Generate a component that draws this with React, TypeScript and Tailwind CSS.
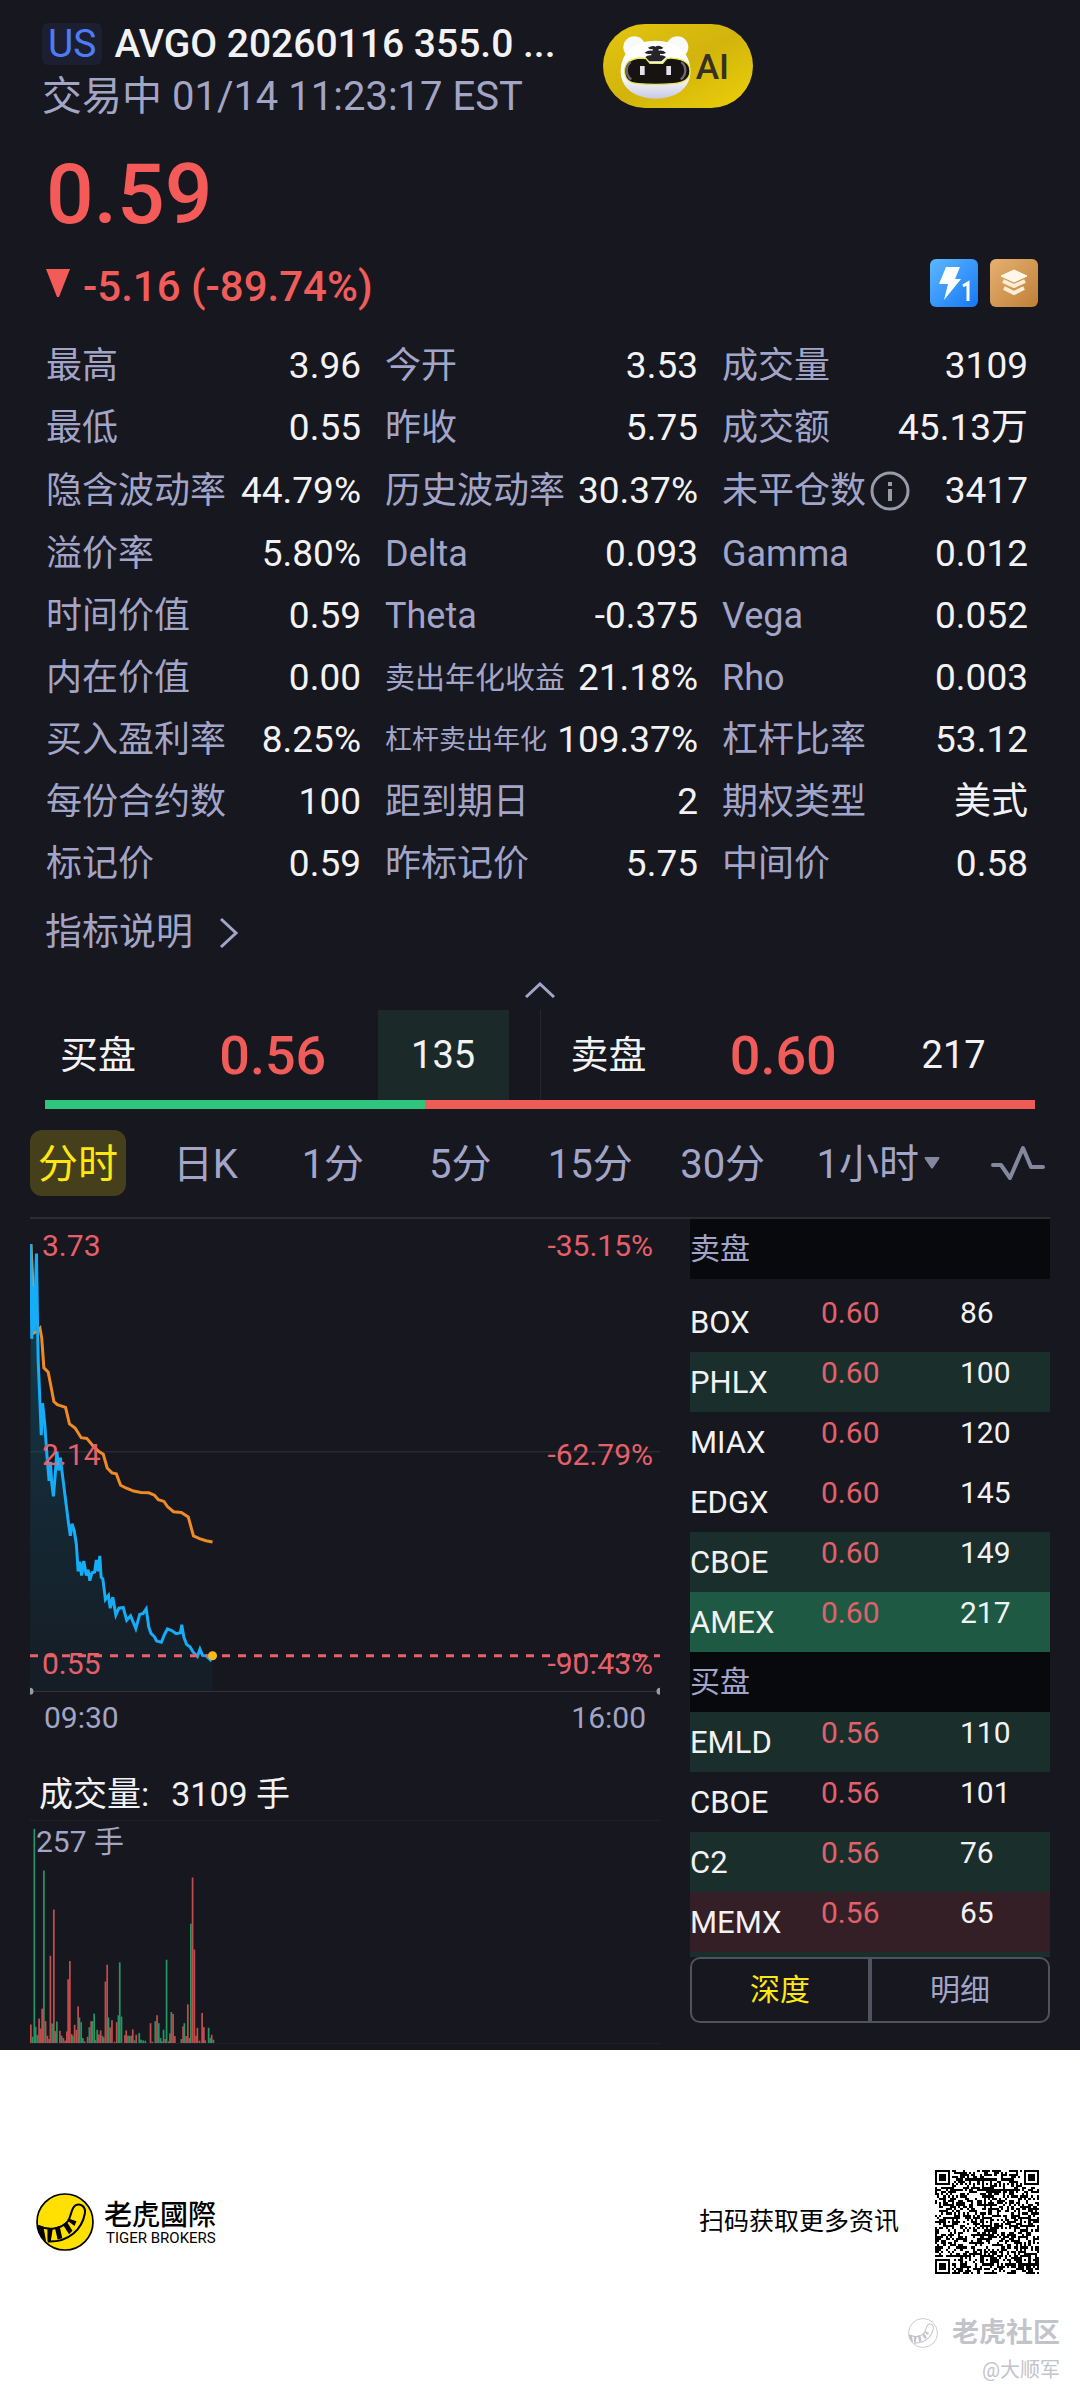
import React, { useState } from "react";

type Stat = { label: string; value: string; size?: string; info?: boolean };

const stats: Stat[] = [
  { label: "最高", value: "3.96" },
  { label: "今开", value: "3.53" },
  { label: "成交量", value: "3109" },
  { label: "最低", value: "0.55" },
  { label: "昨收", value: "5.75" },
  { label: "成交额", value: "45.13万" },
  { label: "隐含波动率", value: "44.79%" },
  { label: "历史波动率", value: "30.37%" },
  { label: "未平仓数", value: "3417", info: true },
  { label: "溢价率", value: "5.80%" },
  { label: "Delta", value: "0.093" },
  { label: "Gamma", value: "0.012" },
  { label: "时间价值", value: "0.59" },
  { label: "Theta", value: "-0.375" },
  { label: "Vega", value: "0.052" },
  { label: "内在价值", value: "0.00" },
  { label: "卖出年化收益", value: "21.18%", size: "text-[30px]" },
  { label: "Rho", value: "0.003" },
  { label: "买入盈利率", value: "8.25%" },
  { label: "杠杆卖出年化", value: "109.37%", size: "text-[27px]" },
  { label: "杠杆比率", value: "53.12" },
  { label: "每份合约数", value: "100" },
  { label: "距到期日", value: "2" },
  { label: "期权类型", value: "美式" },
  { label: "标记价", value: "0.59" },
  { label: "昨标记价", value: "5.75" },
  { label: "中间价", value: "0.58" },
];

const tabs = ["分时", "日K", "1分", "5分", "15分", "30分"];

const asks = [
  { name: "BOX", price: "0.60", size: 86, bg: "" },
  { name: "PHLX", price: "0.60", size: 100, bg: "bg-[#1a2e2b]" },
  { name: "MIAX", price: "0.60", size: 120, bg: "" },
  { name: "EDGX", price: "0.60", size: 145, bg: "" },
  { name: "CBOE", price: "0.60", size: 149, bg: "bg-[#1a2e2b]" },
  { name: "AMEX", price: "0.60", size: 217, bg: "bg-[#1e5a43]" },
];

const bids = [
  { name: "EMLD", price: "0.56", size: 110, bg: "bg-[#1a2e2b]" },
  { name: "CBOE", price: "0.56", size: 101, bg: "" },
  { name: "C2", price: "0.56", size: 76, bg: "bg-[#1a2e2b]" },
  { name: "MEMX", price: "0.56", size: 65, bg: "bg-[#351f26]" },
];

const priceLine =
  "71,128 73,403 76,250 79,380 84,155 86,330 88,470 92,590 95,683 98,590 103,650 108,740 113,815 116,760 119,820 123,860 127,800 131,730 135,785 139,748 143,790 148,840 153,890 158,940 162,975 166,940 171,960 176,1000 180,1078 184,1050 188,1090 193,1048 199,1090 203,1073 207,1105 212,1082 218,1080 222,1045 226,1078 230,1033 233,1095 237,1100 243,1160 250,1148 254,1185 260,1153 267,1205 274,1185 284,1183 292,1220 301,1207 313,1244 322,1203 330,1200 337,1187 343,1240 348,1258 356,1268 361,1280 372,1284 379,1262 386,1245 396,1250 406,1259 416,1256 419,1233 424,1270 430,1290 438,1297 445,1312 455,1325 461,1304 467,1322 475,1323 485,1335 490,1323";

const avgLine =
  "71,128 76,250 79,385 86,380 92,372 96,400 101,487 111,500 118,545 124,585 132,594 151,602 160,650 173,662 187,690 200,692 215,715 228,730 238,738 247,778 258,792 268,795 278,828 290,836 308,845 325,849 343,850 356,857 365,870 378,875 386,890 400,905 418,907 434,920 446,975 460,983 475,989 490,993";

// x, top and direction of each one-minute bar
const volume =
  "71,856,r 75,893,g 79,264,g 82,863,g 86,888,g 90,838,r 94,868,r 97,808,r 101,390,g 105,846,r 109,890,r 113,900,r 116,648,r 120,853,g 124,508,r 127,876,r 131,847,g 138,875,r 142,890,g 146,897,r 150,905,r 154,877,r 157,719,r 161,664,r 165,885,r 168,890,g 172,857,r 176,872,r 180,801,r 183,835,g 187,849,g 191,897,g 195,907,r 202,893,r 206,864,g 210,846,r 213,846,g 217,823,g 220,903,r 224,872,g 228,886,r 232,874,r 236,890,g 239,895,r 243,726,r 247,675,r 250,835,g 254,865,r 258,843,r 264,908,r 269,849,r 273,828,g 276,668,g 280,832,g 288,888,r 291,874,r 295,890,g 299,890,g 303,890,r 306,871,r 310,904,g 314,887,r 321,882,g 325,902,g 330,904,g 335,905,g 347,852,r 351,908,r 358,846,g 362,828,r 366,852,g 370,897,g 373,907,r 377,872,g 381,900,r 384,660,g 389,907,r 392,883,r 395,818,g 399,824,r 403,891,r 418,900,g 422,862,r 425,852,g 429,891,r 433,795,r 437,897,r 440,551,g 444,411,r 448,629,r 452,890,r 455,866,r 460,905,r 466,821,r 470,864,r 473,904,r 481,866,g 485,897,g 488,887,r 492,902,g"
    .split(" ")
    .map((bar) => bar.split(","));

const QR_SIZE = 49;

const qrPath = () => {
  let seed = 20260116;
  let d = "";
  const finders = [
    [3, 3],
    [45, 3],
    [3, 45],
  ];
  const marks = [
    [24, 6],
    [6, 24],
    [24, 24],
    [42, 24],
    [24, 42],
    [42, 42],
  ];
  for (let y = 0; y < QR_SIZE; y++) {
    for (let x = 0; x < QR_SIZE; x++) {
      seed = (seed * 1103515245 + 12345) % 2147483648;
      let on = (seed >> 14) % 2 === 0;
      if (x === 6 || y === 6) on = (x + y) % 2 === 0;
      marks.forEach(([cx, cy]) => {
        const r = Math.max(Math.abs(x - cx), Math.abs(y - cy));
        if (r <= 2) on = r !== 1;
      });
      finders.forEach(([cx, cy]) => {
        const r = Math.max(Math.abs(x - cx), Math.abs(y - cy));
        if (r <= 4) on = r !== 2 && r !== 4;
      });
      if (on) d += `M${x} ${y}h1v1h-1z`;
    }
  }
  return d;
};

const AiButton = () => (
  <button type="button" aria-label="AI" className="mt-[2px] h-[84px] w-[150px] shrink-0">
    <svg viewBox="39 42 450 252" className="h-full w-full">
      <defs>
        <linearGradient id="pill" x1="0" y1="0" x2="1" y2="1">
          <stop offset="0" stopColor="#e3c50f" />
          <stop offset="0.5" stopColor="#d2b40c" />
          <stop offset="1" stopColor="#ecd008" />
        </linearGradient>
        <linearGradient id="face" x1="0" y1="0" x2="0" y2="1">
          <stop offset="0.6" stopColor="#ffffff" />
          <stop offset="1" stopColor="#c9c9e4" />
        </linearGradient>
      </defs>
      <rect x="39" y="42" width="450" height="252" rx="126" fill="url(#pill)" />
      <circle cx="133" cy="112" r="33" fill="#fafafa" />
      <circle cx="262" cy="112" r="33" fill="#fafafa" />
      <path
        d="M197 92c62 0 104 34 104 92 0 54-46 82-104 82S92 238 92 184c0-58 43-92 105-92z"
        fill="url(#face)"
      />
      <path
        d="M150 144c6 0 12 0 18 2l12 14h38l12-14c8-2 14-2 20-1 36 3 50 18 50 38 0 28-22 36-50 38-36 3-72 3-106 0-26-2-40-12-40-39 0-21 16-35 46-38z"
        fill="#171310"
        stroke="#e9e75a"
        strokeWidth="4"
      />
      <path d="M122 156c-16 12-16 40 2 52M274 156c16 12 16 40-2 52" stroke="#6f6672" strokeWidth="7" fill="none" />
      <path
        d="M174 113q14-8 22-3q10-6 24 3q-6 6-14 4l0 5q12-3 22 6q-8 6-18 3l0 5q10-2 18 5l-14 13h-36l-12-13q8-7 18-5v-5q-12 3-20-3q10-9 24-6v-5q-8 2-14-4z"
        fill="#25242a"
      />
      <rect x="150" y="168" width="14" height="27" fill="#e4e2e8" />
      <rect x="229" y="168" width="14" height="27" fill="#e4e2e8" />
      <text x="317" y="207" fontSize="106" fontWeight="500" fill="#373124">
        AI
      </text>
    </svg>
  </button>
);

const TigerMark = ({ className, mono }: { className: string; mono?: boolean }) => (
  <svg viewBox="0 0 172 172" className={className} fill="none">
    <circle cx="86" cy="86" r="83" fill={mono ? "none" : "#ffe000"} stroke="currentColor" strokeWidth="5" />
    <path
      d="M6 98c30 12 66 12 88-14 12-15 9-40 24-48 14-6 30 4 27 24-8 46-46 86-110 84"
      fill={mono ? "none" : "#ffe000"}
      stroke="currentColor"
      strokeWidth="6"
      strokeLinejoin="round"
    />
    <path
      d="M4 94l18 6 8 44-10-10c-10-12-16-26-16-40zM34 104l16 0-6 38-10 0zM56 102l14-4 8 36-14 4zM80 94l12-8 16 26-10 10zM98 76l22 8-6 14-18-14z"
      fill="currentColor"
    />
  </svg>
);

const Header = () => (
  <header className="px-[42px] pt-[22px]">
    <div className="flex">
      <div className="w-[561px] shrink-0">
        <h1 className="flex items-center text-[39px] leading-[44px] font-medium text-[#f2f2f4]">
          <span className="mr-3 rounded-md bg-[#1b1f30] px-[6px] leading-[42px] font-normal text-[#4d7df6]">US</span>
          AVGO 20260116 355.0 ...
        </h1>
        <p className="mt-[7px] text-[40px] leading-[48px] text-[#a3a5c4]">交易中 01/14 11:23:17 EST</p>
      </div>
      <AiButton />
    </div>
    <p className="mt-6 pl-1 text-[84px] leading-[100px] font-medium text-[#f45b58]">0.59</p>
    <div className="mt-[14px] flex h-12 items-center pl-1">
      <svg viewBox="0 0 24 28" className="h-7 w-6" fill="#f45b58">
        <path d="M0 0h24L13 28h-2z" />
      </svg>
      <p className="ml-[13px] pt-2 text-[42px] leading-[48px] font-medium text-[#f05c5a]">-5.16 (-89.74%)</p>
      <button type="button" aria-label="闪电行情" className="ml-auto size-12">
        <svg viewBox="0 0 48 48" className="size-12">
          <defs>
            <linearGradient id="flash" x1="0" y1="0" x2="1" y2="1">
              <stop offset="0" stopColor="#5cb8ff" />
              <stop offset="1" stopColor="#1678f5" />
            </linearGradient>
          </defs>
          <rect width="48" height="48" rx="6" fill="url(#flash)" />
          <path d="M16 8h14l-5 12h6L14 41l4-16H9z" fill="#fff" />
          <path d="M33 27l5-3v18" stroke="#fff" strokeWidth="3" fill="none" />
        </svg>
      </button>
      <button type="button" aria-label="深度行情" className="ml-3 size-12">
        <svg viewBox="0 0 48 48" className="size-12">
          <defs>
            <linearGradient id="layer" x1="0" y1="0" x2="1" y2="1">
              <stop offset="0" stopColor="#e6b071" />
              <stop offset="1" stopColor="#bf8038" />
            </linearGradient>
          </defs>
          <rect width="48" height="48" rx="6" fill="url(#layer)" />
          <path d="M24 11l13 6-13 6-13-6z" fill="#fff8ea" stroke="#fff8ea" strokeWidth="1" />
          <path d="M13 22l11 5 11-5M14 29l10 5 10-5" stroke="#fbeed8" strokeWidth="4" fill="none" />
        </svg>
      </button>
    </div>
  </header>
);

const Stats = () => (
  <dl className="mt-7 grid grid-cols-[315fr_313fr_306fr] gap-x-6 pr-[52px] pl-[46px]">
    {stats.map((item) => (
      <div key={item.label} className="flex items-center justify-between py-[10px] leading-[42px] whitespace-nowrap">
        <dt className={`flex items-center text-[#a3a5c8] ${item.size ?? "text-[36px]"}`}>
          {item.label}
          {item.info && (
            <svg viewBox="0 0 44 44" className="ml-[2px] size-11" fill="none" stroke="#9a9ba8" strokeWidth="3">
              <circle cx="22" cy="22" r="18" />
              <path d="M22 20v12M22 13v4" strokeWidth="4" />
            </svg>
          )}
        </dt>
        <dd className="text-[37px] text-[#f2f2f4]">{item.value}</dd>
      </div>
    ))}
  </dl>
);

const Quote = ({ side, price, size, sizeBg }: { side: string; price: string; size: string; sizeBg: string }) => (
  <div className="grid grid-cols-[123fr_210fr_131fr] items-center text-[38px] text-[#f2f2f4]">
    <span className="pl-[15px]">{side}</span>
    <span className="text-center text-[54px] font-medium text-[#f05c5a]">{price}</span>
    <span className={`flex h-full items-center justify-center ${sizeBg}`}>{size}</span>
  </div>
);

const Tabs = () => {
  const [active, setActive] = useState("分时");
  return (
    <nav className="mr-[35px] ml-[30px] mt-[21px] flex items-center justify-between text-[40px] leading-[62px] text-[#a3a5c8]">
      {tabs.map((tab) => (
        <button
          key={tab}
          type="button"
          onClick={() => setActive(tab)}
          className={`min-w-24 rounded-xl px-2 pt-1 ${active === tab ? "bg-[#453f1b] text-[#ffe714]" : ""}`}
        >
          {tab}
        </button>
      ))}
      <div className="flex items-center pl-3">
        <select aria-label="周期" className="appearance-none bg-transparent pt-1 leading-[62px]" defaultValue="1小时">
          <option>1小时</option>
          <option>2小时</option>
          <option>4小时</option>
        </select>
        <svg viewBox="0 0 16 12" className="ml-1 h-3 w-4" fill="#85879f">
          <path d="M1 0h14q1 1 0 2L9 11q-1 1-2 0L1 2q-1-1 0-2z" />
        </svg>
      </div>
      <button type="button" aria-label="指标" className="pl-5">
        <svg viewBox="0 0 54 36" className="h-9 w-[54px]" fill="none" stroke="#85879f" strokeWidth="4">
          <path d="M2 20h8l9 13L32 3l8 19h12" strokeLinecap="round" strokeLinejoin="round" />
        </svg>
      </button>
    </nav>
  );
};

const PriceChart = () => (
  <div className="relative h-[476px] text-[30px] leading-9 text-[#e5606a]">
    <svg viewBox="69 55 1453 1382" preserveAspectRatio="none" className="h-full w-full" fill="none">
      <defs>
        <linearGradient id="area" x1="0" y1="0" x2="0" y2="1">
          <stop offset="0" stopColor="#0d6d8c" stopOpacity="0.5" />
          <stop offset="1" stopColor="#12404e" stopOpacity="0.15" />
        </linearGradient>
      </defs>
      <path d="M69 731H1522M69 1427H1522" stroke="#33353b" strokeWidth="1" vectorEffect="non-scaling-stroke" />
      <polygon points={`69,1427 ${priceLine} 490,1427`} fill="url(#area)" />
      <polyline points={avgLine} stroke="#f08a24" strokeWidth="3" vectorEffect="non-scaling-stroke" />
      <polyline points={priceLine} stroke="#16adf8" strokeWidth="3" vectorEffect="non-scaling-stroke" />
      <path
        d="M69 1323H1522"
        stroke="#ee5f68"
        strokeWidth="3"
        strokeDasharray="8 8"
        vectorEffect="non-scaling-stroke"
      />
      <path d="M490 1323h0" stroke="#fbb81c" strokeWidth="9" strokeLinecap="round" vectorEffect="non-scaling-stroke" />
      <path
        d="M69 1426h0M1522 1426h0"
        stroke="#9a9ba3"
        strokeWidth="7"
        strokeLinecap="round"
        vectorEffect="non-scaling-stroke"
      />
    </svg>
    <div className="absolute top-[9px] right-[7px] bottom-[13px] left-3 flex flex-col justify-between">
      <p className="flex justify-between">
        <span>3.73</span>
        <span>-35.15%</span>
      </p>
      <p className="flex justify-between">
        <span>2.14</span>
        <span>-62.79%</span>
      </p>
      <p className="flex justify-between">
        <span>0.55</span>
        <span>-90.43%</span>
      </p>
    </div>
  </div>
);

const VolumeChart = () => (
  <div className="relative h-[224px] border-y border-[#202128]">
    <svg viewBox="69 240 1453 672" preserveAspectRatio="none" className="h-full w-full">
      {volume.map(([x, top, dir]) => (
        <rect
          key={x}
          x={Number(x) - 2}
          y={top}
          width="4"
          height={912 - Number(top)}
          fill={dir === "g" ? "#279463" : "#c04d4c"}
        />
      ))}
    </svg>
    <span className="absolute top-0 left-[6px] text-[30px] leading-[42px] text-[#a3a5c4]">257 手</span>
  </div>
);

const BookRows = ({ rows }: { rows: typeof asks }) => (
  <>
    {rows.map((row) => (
      <tr key={row.name} className={`h-[60px] ${row.bg}`}>
        <th scope="row" className="p-0 pt-[2px] text-left text-[31px] font-normal">
          {row.name}
        </th>
        <td className="p-0 align-top leading-[42px] text-[#e0616a]">{row.price}</td>
        <td className="p-0 align-top leading-[42px]">{row.size}</td>
      </tr>
    ))}
  </>
);

const OrderBook = () => {
  const [mode, setMode] = useState("深度");
  return (
    <div>
      <table className="w-full table-fixed border-collapse text-[30px] leading-[42px] text-[#f2f2f4]">
        <colgroup>
          <col className="w-[131px]" />
          <col className="w-[139px]" />
          <col />
        </colgroup>
        <tbody>
          <tr className="h-[60px] bg-[#08090d]">
            <th colSpan={3} className="p-0 text-left font-normal text-[#a3a5c8]">
              卖盘
            </th>
          </tr>
          <tr className="h-[13px]" />
          <BookRows rows={asks} />
          <tr className="h-[60px] bg-[#08090d]">
            <th colSpan={3} className="p-0 text-left font-normal text-[#a3a5c8]">
              买盘
            </th>
          </tr>
          <BookRows rows={bids} />
          <tr className="h-[5px] bg-[#1a2e2b]">
            <td colSpan={3} className="p-0" />
          </tr>
        </tbody>
      </table>
      <div className="grid grid-cols-2 text-[30px] leading-[62px]">
        {["深度", "明细"].map((name) => (
          <button
            key={name}
            type="button"
            onClick={() => setMode(name)}
            className={`border-2 border-[#50525f] first:rounded-l-[10px] last:rounded-r-[10px] ${
              mode === name ? "text-[#ffe714]" : "text-[#a3a5c8]"
            }`}
          >
            {name}
          </button>
        ))}
      </div>
    </div>
  );
};

const Footer = () => (
  <footer className="bg-white pt-[120px] pb-[13px] text-black">
    <div className="flex items-center pr-[41px] pl-9">
      <TigerMark className="size-[58px]" />
      <div className="ml-[10px]">
        <p className="font-['Noto_Sans_CJK_TC',sans-serif] text-[28px] leading-8 font-medium">老虎國際</p>
        <p className="pl-[2px] text-[15px] leading-[18px]">TIGER BROKERS</p>
      </div>
      <p className="mr-9 ml-auto text-[25px]">扫码获取更多资讯</p>
      <svg viewBox="0 0 49 49" className="size-[104px]" shapeRendering="crispEdges">
        <path d={qrPath()} />
      </svg>
    </div>
    <div className="mt-[42px] flex flex-col items-end pr-5 text-[#c3c3ca]">
      <p className="flex items-center text-[27px] leading-[34px] font-bold">
        <TigerMark mono className="mr-[14px] size-[30px]" />
        老虎社区
      </p>
      <p className="mt-2 text-[20px] leading-6">@大顺军</p>
    </div>
  </footer>
);

const App = () => {
  return (
    <div className="min-h-screen bg-white font-['Roboto','Noto_Sans_CJK_SC',sans-serif]">
      <main className="bg-[#16171f]">
        <Header />
        <Stats />
        <a href="#explain" className="mt-[14px] ml-[45px] inline-flex items-center text-[37px] leading-[48px] text-[#a3a5c8]">
          指标说明
          <svg viewBox="0 0 20 32" className="ml-[26px] h-8 w-5" fill="none" stroke="currentColor" strokeWidth="3">
            <path d="M2 2l15 14L2 30" />
          </svg>
        </a>
        <button type="button" aria-label="收起" className="flex h-[53px] w-full items-end justify-center pb-3">
          <svg viewBox="0 0 30 16" className="h-4 w-[30px]" fill="none" stroke="#a3a5c8" strokeWidth="3">
            <path d="M1 15L15 2l14 13" />
          </svg>
        </button>
        <div className="mx-[45px]">
          <div className="flex h-[90px]">
            <div className="grid flex-1 pr-[31px]">
              <Quote side="买盘" price="0.56" size="135" sizeBg="bg-[#1b2a29]" />
            </div>
            <div className="w-px bg-[#25262e]" />
            <div className="grid flex-1 pr-4 pl-[15px]">
              <Quote side="卖盘" price="0.60" size="217" sizeBg="" />
            </div>
          </div>
          <div className="flex h-[9px] bg-[#ee5c58]">
            <div className="bg-[#2fc57c]" style={{ width: `${(135 / (135 + 217)) * 100}%` }} />
          </div>
        </div>
        <Tabs />
        <div className="mx-[30px] mt-[21px] grid grid-cols-[7fr_4fr] gap-x-[30px] border-t-2 border-[#2b2c30] pb-[27px]">
          <div className="-mb-[21px]">
            <PriceChart />
            <p className="flex justify-between px-[14px] text-[30px] leading-[46px] text-[#a3a5c4]">
              <span>09:30</span>
              <span>16:00</span>
            </p>
            <p className="mt-[27px] flex gap-[22px] pl-[9px] text-[34px] leading-[52px] text-[#f2f2f4]">
              <span>成交量:</span>
              <span>3109 手</span>
            </p>
            <VolumeChart />
          </div>
          <OrderBook />
        </div>
      </main>
      <Footer />
    </div>
  );
};

export default App;
